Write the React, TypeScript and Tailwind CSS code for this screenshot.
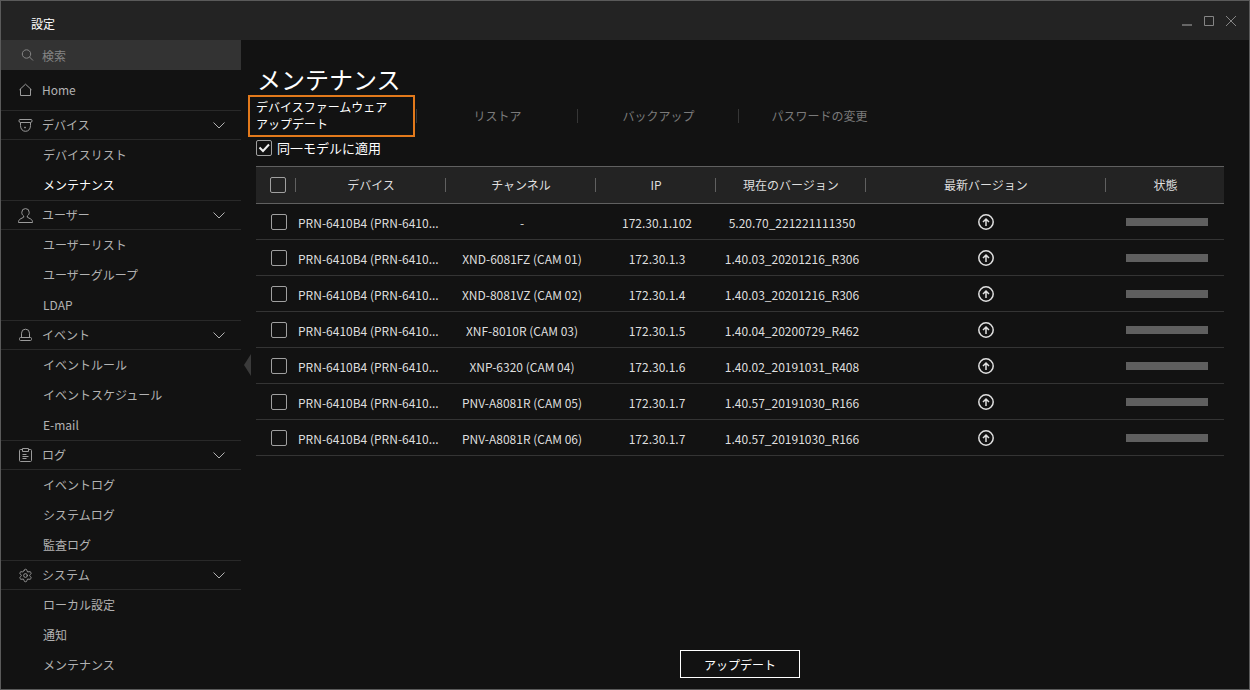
import React, { useState } from "react";
import { Settings } from "lucide-react";

type IconName = "home" | "camera" | "user" | "siren" | "log" | "gear";

function MenuIcon({ name }: { name: IconName }) {
  if (name === "gear") {
    return <Settings className="size-[15px] shrink-0" color="#9b9b9b" strokeWidth={1.5} aria-hidden="true" />;
  }
  const shapes = {
    home: <path d="M1.5 6.8 7.5 1.2l6 5.6M2.5 6v6.5h10V6" />,
    camera: (
      <>
        <path d="M2 1.5h11c.6 0 1 .4 1 1v.5c0 .8-.5 1.5-1.3 1.5H2.3C1.5 4.5 1 3.8 1 3v-.5c0-.6.4-1 1-1zM2.5 4.5v3c0 3.5 2 5.8 5 5.8s5-2.3 5-5.8v-3" />
        <path d="M6.2 9.5h1.6M7 8.7v1.6" strokeWidth="1.2" />
      </>
    ),
    user: (
      <path d="M5.7 8C4.3 6.9 3.8 5.8 3.8 4.3a3.7 3.7 0 0 1 7.4 0c0 1.5-.5 2.6-1.9 3.7v1.2l3.6 1.9c1 .6 1.6 1.6 1.6 3.400H.5c0-1.800.6-2.800 1.600-3.400l3.600-1.900z" />
    ),
    siren: (
      <path d="M3.5 9.5V5.2a4 4 0 0 1 8 0v4.3M2.5 9.5h10c.6 0 1 .4 1 1v1c0 .6-.4 1-1 1h-10c-.6 0-1-.4-1-1v-1c0-.6.4-1 1-1z" />
    ),
    log: (
      <>
        <path d="M4.5 1.5h-2c-.6 0-1 .4-1 1v10c0 .6.4 1 1 1h10c.6 0 1-.4 1-1v-10c0-.6-.4-1-1-1h-2" />
        <path d="M4.5.5h6v3h-6zM4.5 6.500h4M4.500 8.500h6M4.500 10.500h4" />
      </>
    ),
  };
  return (
    <svg
      className="size-[15px] shrink-0"
      viewBox="0 0 15 15"
      fill="none"
      stroke="#9b9b9b"
      strokeWidth="1"
      aria-hidden="true"
    >
      {shapes[name]}
    </svg>
  );
}

const groups: { title: string; icon: IconName; items: string[] }[] = [
  { title: "デバイス", icon: "camera", items: ["デバイスリスト", "メンテナンス"] },
  { title: "ユーザー", icon: "user", items: ["ユーザーリスト", "ユーザーグループ", "LDAP"] },
  { title: "イベント", icon: "siren", items: ["イベントルール", "イベントスケジュール", "E-mail"] },
  { title: "ログ", icon: "log", items: ["イベントログ", "システムログ", "監査ログ"] },
  { title: "システム", icon: "gear", items: ["ローカル設定", "通知", "メンテナンス"] },
];

const rows = [
  ["-", "172.30.1.102", "5.20.70_221221111350"],
  ["XND-6081FZ (CAM 01)", "172.30.1.3", "1.40.03_20201216_R306"],
  ["XND-8081VZ (CAM 02)", "172.30.1.4", "1.40.03_20201216_R306"],
  ["XNF-8010R (CAM 03)", "172.30.1.5", "1.40.04_20200729_R462"],
  ["XNP-6320 (CAM 04)", "172.30.1.6", "1.40.02_20191031_R408"],
  ["PNV-A8081R (CAM 05)", "172.30.1.7", "1.40.57_20191030_R166"],
  ["PNV-A8081R (CAM 06)", "172.30.1.7", "1.40.57_20191030_R166"],
];

const columns = ["デバイス", "チャンネル", "IP", "現在のバージョン", "最新バージョン", "状態"];

function CheckBox(props: React.InputHTMLAttributes<HTMLInputElement>) {
  return (
    <span className="relative block size-4 shrink-0">
      <input
        type="checkbox"
        className="peer block size-4 appearance-none rounded-[2px] border border-[#a0a0a0] bg-transparent"
        {...props}
      />
      <svg
        className="pointer-events-none absolute inset-0 hidden size-4 peer-checked:block"
        viewBox="0 0 16 16"
        fill="none"
        stroke="#f0f0f0"
        strokeWidth="2"
        aria-hidden="true"
      >
        <path d="M3.5 7.5 7 11l6-6.500" />
      </svg>
    </span>
  );
}

function Sidebar() {
  const [closed, setClosed] = useState<string[]>([]);
  const toggle = (title: string) =>
    setClosed((list) => (list.includes(title) ? list.filter((t) => t !== title) : [...list, title]));

  return (
    <aside className="w-60 shrink-0 text-[#b2b2b2]">
      <label className="flex h-[30px] items-center gap-2 bg-[#333333] pl-[18px]">
        <svg className="size-[15px] shrink-0" viewBox="0 0 15 15" fill="none" stroke="#858585" aria-hidden="true">
          <circle cx="7.5" cy="6" r="4.2" />
          <path d="m10.5 9 3.5 3.5" />
        </svg>
        <input
          type="search"
          aria-label="検索"
          placeholder="検索"
          className="w-full min-w-0 bg-transparent pt-0.5 outline-none placeholder:text-[#858585]"
        />
      </label>
      <nav>
        <a href="#home" className="flex h-10 items-center gap-[9px] pl-[17px]">
          <MenuIcon name="home" />
          Home
        </a>
        {groups.map((group, g) => (
          <section key={group.title}>
            <button
              type="button"
              aria-expanded={!closed.includes(group.title)}
              onClick={() => toggle(group.title)}
              className="flex h-[30px] w-full items-center gap-[9px] border-y border-[#292929] pr-4 pl-[17px] text-left"
            >
              <MenuIcon name={group.icon} />
              <span className="grow">{group.title}</span>
              <svg className="h-2 w-3" viewBox="0 0 12 8" fill="none" stroke="#b2b2b2" aria-hidden="true">
                <path d="m.5 1.5 5.5 5.5 5.5-5.5" />
              </svg>
            </button>
            {!closed.includes(group.title) && (
              <ul>
                {group.items.map((item, i) => (
                  <li key={item}>
                    <a
                      href="#page"
                      className={
                        g === 0 && i === 1
                          ? "flex h-[30px] items-center pl-[42px] text-white"
                          : "flex h-[30px] items-center pl-[42px]"
                      }
                    >
                      {item}
                    </a>
                  </li>
                ))}
              </ul>
            )}
          </section>
        ))}
      </nav>
    </aside>
  );
}

function DeviceTable() {
  return (
    <table className="w-full table-fixed border-collapse">
      <colgroup>
        <col className="w-10" />
        <col className="w-[150px]" />
        <col className="w-[150px]" />
        <col className="w-[120px]" />
        <col className="w-[150px]" />
        <col />
        <col className="w-[118px]" />
      </colgroup>
      <thead>
        <tr className="h-[37px] border-y border-[#606060] bg-[#232323]">
          <th className="p-0">
            <div className="flex h-[14px] items-center border-r border-[#606060] pl-[14px]">
              <CheckBox aria-label="すべて選択" />
            </div>
          </th>
          {columns.map((column, i) => (
            <th key={column} className="p-0 font-normal">
              <div
                className={
                  i < columns.length - 1
                    ? "flex h-[14px] items-center justify-center border-r border-[#606060] pl-px"
                    : "flex h-[14px] items-center justify-center pl-px"
                }
              >
                {column}
              </div>
            </th>
          ))}
        </tr>
      </thead>
      <tbody>
        {rows.map(([channel, ip, version], i) => (
          <tr key={i} className="h-9 border-b border-[#343434] text-center">
            <td className="p-0 pl-[15px]">
              <CheckBox aria-label={`${channel} ${ip}`} />
            </td>
            <td className="pt-0.5 pr-0 pb-0 pl-0.5 text-left whitespace-nowrap">PRN-6410B4 (PRN-6410...</td>
            <td className="pt-0.5 pr-0 pb-0 pl-0.5 whitespace-nowrap">{channel}</td>
            <td className="pt-0.5 pr-0 pb-0 pl-0.5">{ip}</td>
            <td className="pt-0.5 pr-0 pb-0 pl-0.5">{version}</td>
            <td className="p-0">
              <button type="button" aria-label="アップデート" className="mx-auto block">
                <svg className="size-4" viewBox="0 0 16 16" fill="none" stroke="#e0e0e0" strokeWidth="1.5">
                  <circle cx="8" cy="8" r="7.2" />
                  <path d="M8 12V5M5 8l3-3 3 3" />
                </svg>
              </button>
            </td>
            <td className="p-0 pr-4 pl-5">
              <div className="h-2 bg-[#5f5f5f]" />
            </td>
          </tr>
        ))}
      </tbody>
    </table>
  );
}

export default function App() {
  return (
    <div
      lang="ja"
      className="flex min-h-screen flex-col border border-[#5a5a5a] bg-[#121212] font-['Noto_Sans_CJK_JP',sans-serif] text-xs text-[#dedede]"
    >
      <header className="flex h-[39px] items-center justify-between bg-[#232323] pr-[7px] pl-[30px]">
        <h1 className="pt-[6px] text-white">設定</h1>
        <div className="flex">
          <button type="button" aria-label="最小化" className="flex w-[22px] justify-center">
            <svg className="size-3" viewBox="0 0 12 12" fill="#666666">
              <path d="M1 9h10v2H1z" />
            </svg>
          </button>
          <button type="button" aria-label="最大化" className="flex w-[22px] justify-center">
            <svg className="size-3" viewBox="0 0 12 12" fill="none" stroke="#858585">
              <path d="M1.5 1.5h9v9h-9z" />
            </svg>
          </button>
          <button type="button" aria-label="閉じる" className="flex w-[22px] justify-center">
            <svg className="size-3" viewBox="0 0 12 12" fill="none" stroke="#858585">
              <path d="m1 1 10 10M11 1 1 11" />
            </svg>
          </button>
        </div>
      </header>

      <div className="flex grow">
        <Sidebar />
        <main className="relative flex min-w-0 grow flex-col pt-6 pr-[25px] pb-[11px] pl-[15px]">
          <button type="button" aria-label="メニューを閉じる" className="absolute top-1/2 left-[3px] -translate-y-1/2">
            <svg className="h-[22px] w-[7px]" viewBox="0 0 7 22" fill="#3a3a3a">
              <path d="M7 0v22L0 11z" />
            </svg>
          </button>
          <h2 className="h-[31px] pl-px text-2xl leading-[29px] text-white">メンテナンス</h2>
          <nav className="-ml-2 flex h-[42px] items-center text-[#7a7a7a]">
            <a
              href="#firmware"
              className="mr-px flex h-full w-[167px] items-center border-2 border-[#e2791b] pb-0.5 pl-[6px] leading-[17px] text-white"
            >
              <span>
                デバイスファームウェア
                <br />
                アップデート
              </span>
            </a>
            {["リストア", "バックアップ", "パスワードの変更"].map((tab) => (
              <a
                key={tab}
                href="#tab"
                className="flex h-[14px] w-[161px] items-center justify-center border-l border-[#363636] pl-px"
              >
                {tab}
              </a>
            ))}
          </nav>
          <label className="flex h-[29px] items-start gap-[5px] pt-[3px] text-[13px] leading-4 text-white">
            <CheckBox defaultChecked />
            同一モデルに適用
          </label>
          <DeviceTable />
          <div className="mt-auto flex justify-center pt-4">
            <button type="button" className="h-7 w-[120px] border border-white pt-0.5 text-white">
              アップデート
            </button>
          </div>
        </main>
      </div>
    </div>
  );
}
